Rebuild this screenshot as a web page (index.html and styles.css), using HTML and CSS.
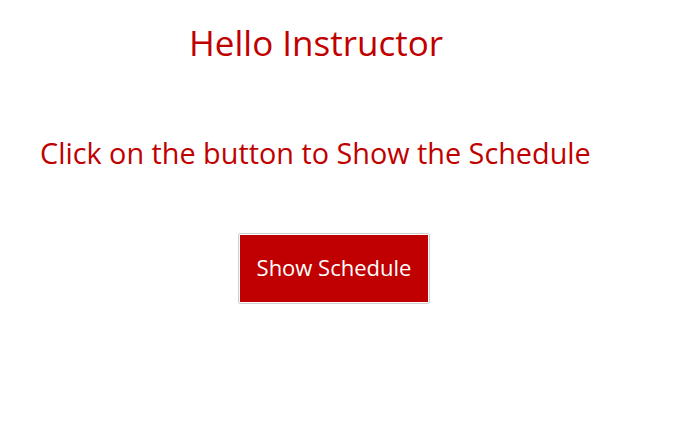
FILE: index.html
```html
<!DOCTYPE html>
<html>
<head>
<meta charset="utf-8">
<link rel="stylesheet" href="styles.css">
</head>
<body>
<div class="page">
  <h1 class="greeting">Hello Instructor</h1>
  <p class="prompt">Click on the button to Show the Schedule</p>
  <div class="action">
    <div class="btn-frame"><button class="btn">Show Schedule</button></div>
  </div>
</div>
</body>
</html>
```
FILE: styles.css
```css
html, body { margin: 0; padding: 0; background: #fff; }
.page {
  font-family: "Open Sans", "Noto Sans", sans-serif;
  color: #c00000;
  display: flex;
  flex-direction: column;
  align-items: flex-start;
}
.greeting {
  margin: 19px 0 0 189px;
  font-size: 35px;
  font-weight: normal;
  line-height: 48px;
}
.prompt {
  margin: 66px 0 0 40px;
  font-size: 28.8px;
  line-height: 40px;
}
.action { margin: 60px 0 0 238px; }
.btn-frame {
  border: 1px solid #d0d0d0;
  border-radius: 2px;
  padding: 1px;
  background: #fff;
}
.btn {
  display: block;
  width: 188px;
  height: 67px;
  border: none;
  background: #c00000;
  color: #fff;
  font-family: "Open Sans", "Noto Sans", sans-serif;
  font-size: 22px;
  padding: 0 0 4px;
}
```
